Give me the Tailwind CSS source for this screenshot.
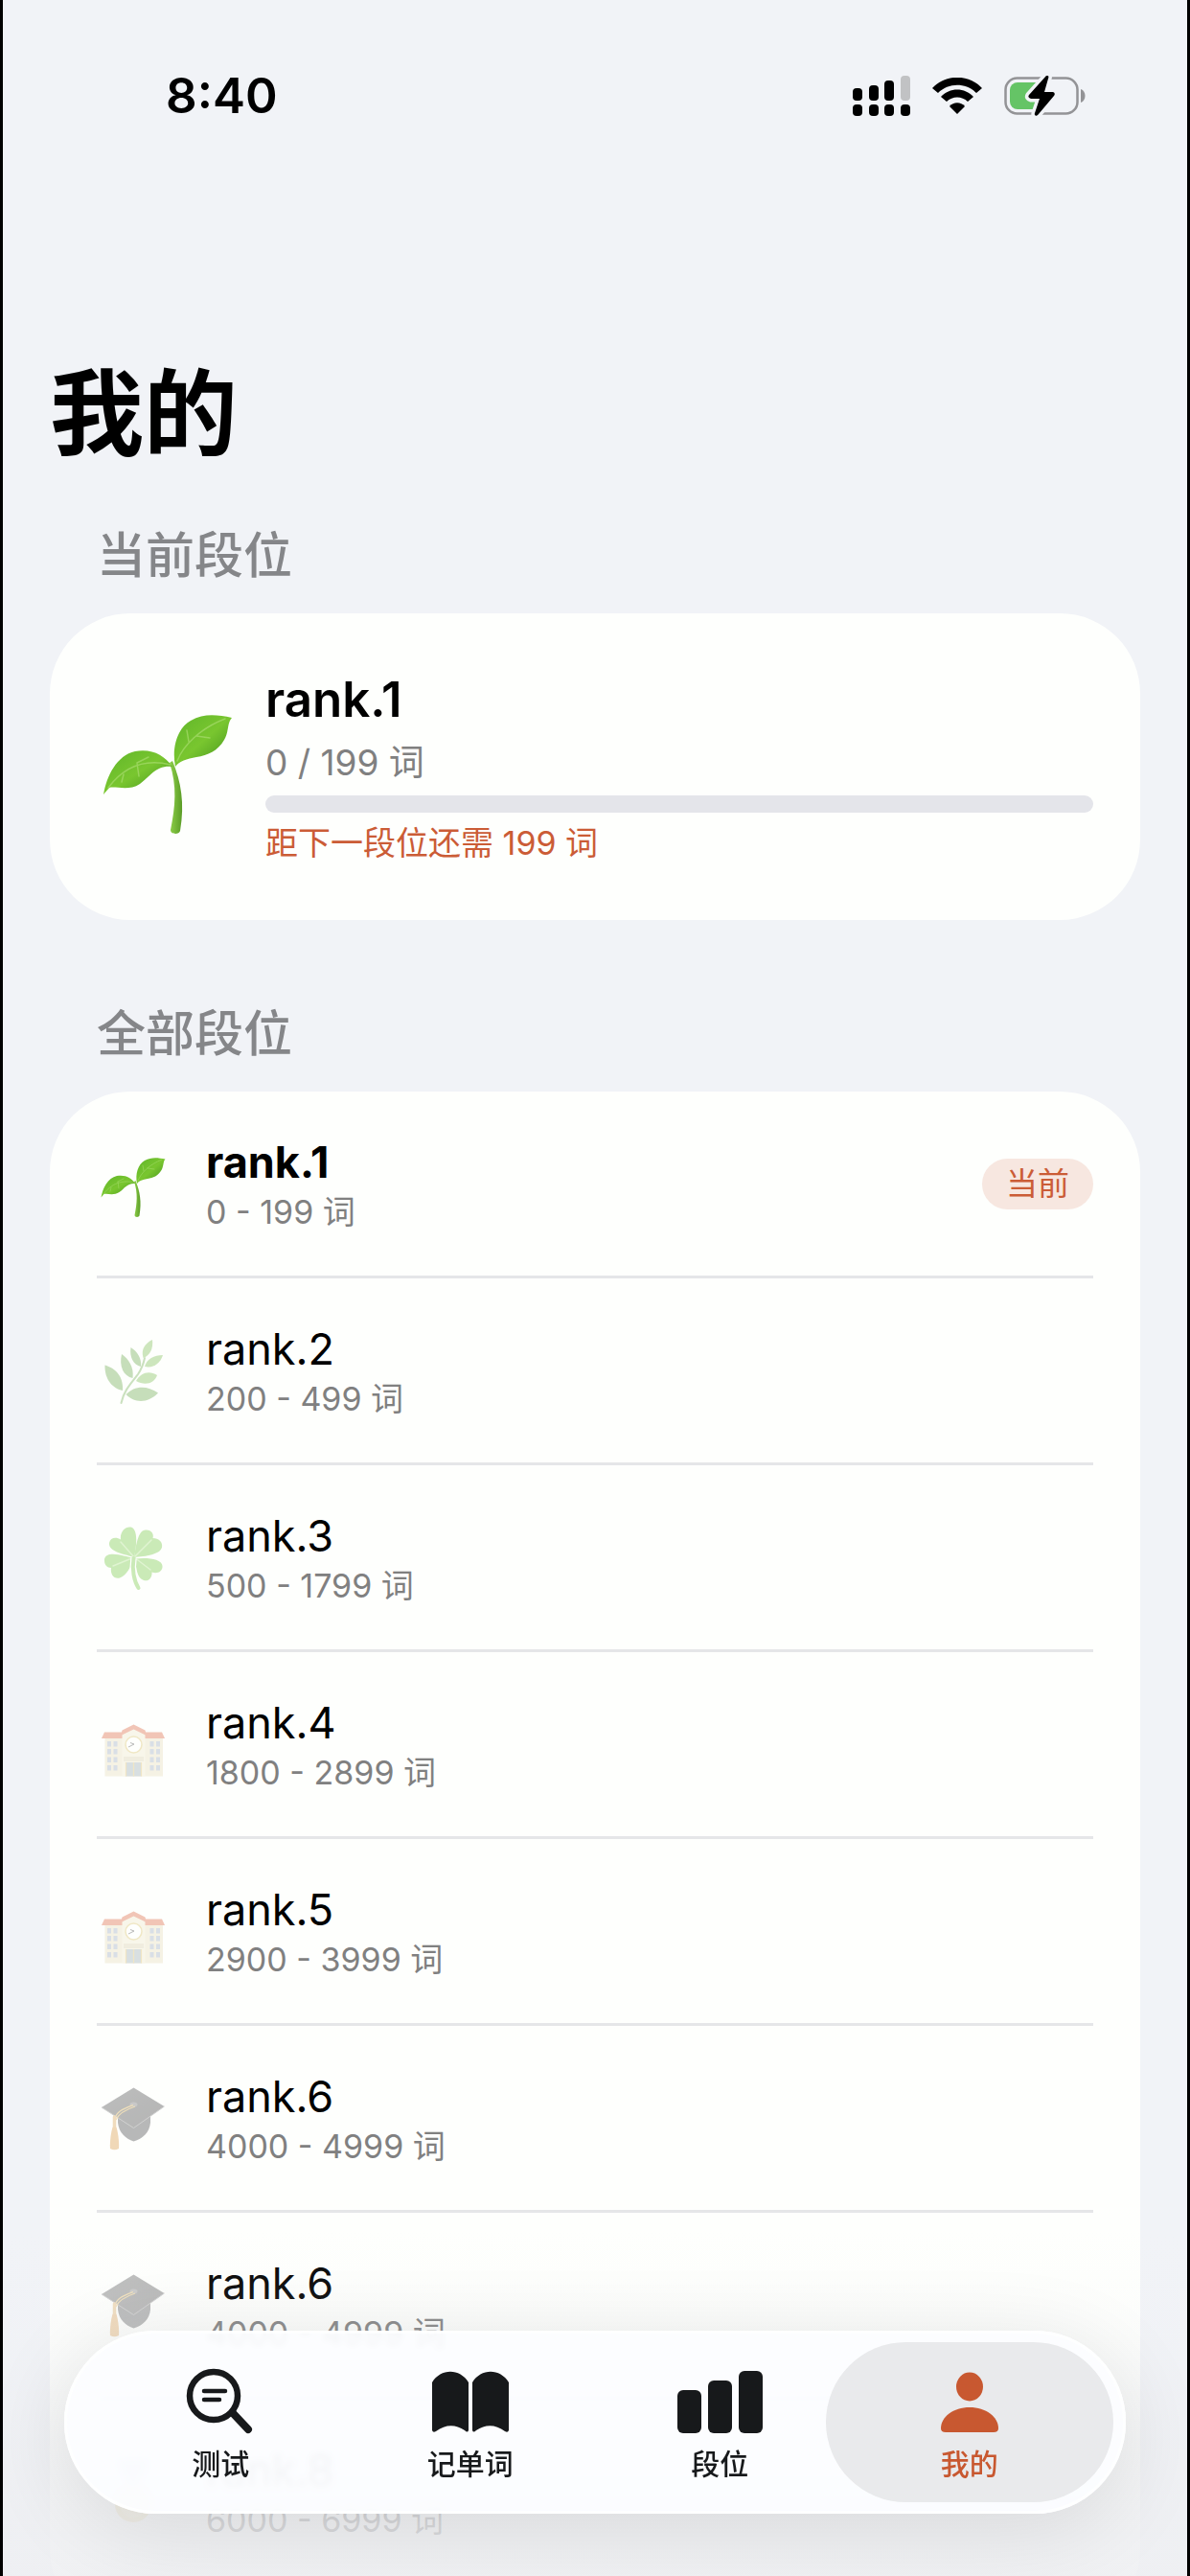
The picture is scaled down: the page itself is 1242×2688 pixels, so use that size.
<!DOCTYPE html>
<html lang="zh-CN">
<head>
<meta charset="utf-8">
<meta name="viewport" content="width=device-width, initial-scale=1">
<title>我的</title>
<script src="https://cdn.jsdelivr.net/npm/@tailwindcss/browser@4"></script>
</head>
<body class="bg-black font-['Inter','Noto_Sans_CJK_SC',sans-serif] text-black">

<!-- Shared drawings -->
<svg class="absolute size-0" aria-hidden="true">
  <defs>
    <linearGradient id="leafA" x1="0" y1="0" x2="1" y2="1"><stop offset="0" stop-color="#5fb52a"/><stop offset=".5" stop-color="#79c62f"/><stop offset="1" stop-color="#3f8f1c"/></linearGradient>
    <linearGradient id="stemA" x1="0" y1="0" x2="1" y2="0"><stop offset="0" stop-color="#8fd04a"/><stop offset="1" stop-color="#5a9c26"/></linearGradient>
    <linearGradient id="capA" x1="0" y1="0" x2="1" y2="1"><stop offset="0" stop-color="#5c5c5e"/><stop offset="1" stop-color="#48484a"/></linearGradient>
  </defs>
  <symbol id="sprout" viewBox="0 0 148 148">
    <path d="M79 68C88 90 92 112 87 141C86 145 77 145 77 140C82 116 84 94 76 70Z" fill="url(#stemA)"/>
    <path d="M7 103C10 84 21 62 40 58C58 55 70 62 79 74C62 72 56 84 45 92C33 100 20 94 13 96Z" fill="url(#leafA)"/>
    <path d="M82 74C78 54 84 34 98 26C112 18 126 20 141 23C136 28 138 38 133 46C126 58 116 62 104 64C94 66 86 68 82 74Z" fill="url(#leafA)"/>
    <path d="M12 96C24 80 44 64 77 72M84 68C90 52 108 34 134 24M28 82L26 90M42 70L44 84M42 70L54 64M96 48L94 36M104 42L118 44" fill="none" stroke="#a6dc6c" stroke-opacity=".7" stroke-width="1.500" stroke-linecap="round"/>
  </symbol>
  <symbol id="herb" viewBox="0 0 148 148">
    <path d="M49 142C54 116 72 98 84 82C92 70 96 58 98 48" fill="none" stroke="#7fb562" stroke-width="4" stroke-linecap="round"/>
    <g fill="#74ad57">
      <path d="M52 116C32 112 14 94 15 63C32 68 54 82 52 116Z"/>
      <path d="M73 90C54 86 44 66 50 40C64 50 76 66 73 90Z"/>
      <path d="M90 66C74 62 66 46 69 26C82 34 92 48 90 66Z"/>
      <path d="M59 124C76 106 102 104 126 121C106 142 78 144 59 124Z"/>
    </g>
    <g fill="#86c35e">
      <path d="M95 48C90 30 98 18 114 10C116 28 110 42 95 48Z"/>
      <path d="M98 66C102 50 118 42 136 42C130 60 116 70 98 66Z"/>
      <path d="M80 96C90 78 108 74 124 84C118 102 98 106 80 96Z"/>
    </g>
  </symbol>
  <symbol id="clover" viewBox="0 0 148 148">
    <g fill="#7ecb50">
      <path d="M76 74C60 68 22 64 24 44C26 33 38 31 48 37C46 20 58 9 69 11C85 15 81 50 76 74Z"/>
      <path d="M76 74C80 50 84 17 100 17C112 16 118 26 115 34C127 34 136 42 134 53C131 68 100 72 76 74Z"/>
      <path d="M78 77C100 74 134 76 135 92C136 104 124 109 113 105C114 117 106 125 96 122C82 118 80 96 78 77Z"/>
      <path d="M74 76C58 72 18 58 14 78C13 90 20 96 28 96C26 110 34 120 46 117C60 112 70 94 74 76Z"/>
    </g>
    <path d="M76 74L48 42M76 74L112 38M76 74L110 100M76 74L32 92" stroke="#b4e492" stroke-width="3" stroke-linecap="round"/>
    <path d="M75 76C71 100 76 124 85 138" fill="none" stroke="#fefffd" stroke-width="13"/>
    <path d="M75 76C71 100 76 124 85 138" fill="none" stroke="#7ecb50" stroke-width="8" stroke-linecap="round"/>
  </symbol>
  <symbol id="school" viewBox="0 0 148 148">
    <path d="M15 60H136V141H15Z" fill="#e9dfc0"/>
    <path d="M8 62L14 49H134L140 62Z" fill="#e0714e"/>
    <path d="M51 54L75 40L99 54V141H51Z" fill="#f1ead0"/>
    <path d="M48 56L51 45L75 33L99 45L102 56L75 43Z" fill="#e0714e"/>
    <circle cx="75" cy="75" r="17" fill="#fff" stroke="#dcc673" stroke-width="3"/>
    <path d="M64 80L76 74L68 71" fill="none" stroke="#555" stroke-width="2"/>
    <path d="M54 100H96V110H54Z" fill="#ddd3b4"/>
    <path d="M59 112H91V141H59Z" fill="#a2b0b9"/>
    <path d="M59 112V141M75 112V141M91 112V141" stroke="#dcbf74" stroke-width="2.500"/>
    <path d="M20 68h8v11h-8zM33 68h8v11h-8zM20 84h8v11h-8zM33 84h8v11h-8zM20 101h8v11h-8zM33 101h8v11h-8zM20 118h8v11h-8zM33 118h8v11h-8zM109 68h8v11h-8zM122 68h8v11h-8zM109 84h8v11h-8zM122 84h8v11h-8zM109 101h8v11h-8zM122 101h8v11h-8zM109 118h8v11h-8zM122 118h8v11h-8z" fill="#a3b1c4"/>
  </symbol>
  <symbol id="gradcap" viewBox="0 0 148 148">
    <path d="M42 68V84C44 104 58 118 75 123C94 118 108 104 110 84V68Z" fill="#505052"/>
    <path d="M75 11L139 50L75 95L8 52Z" fill="url(#capA)"/>
    <path d="M8 52L75 95L139 50" fill="none" stroke="#8e8e90" stroke-width="2"/>
    <ellipse cx="75" cy="46" rx="8" ry="5" fill="#78787a"/>
    <path d="M74 47C56 54 38 60 35 78M78 50C60 56 44 64 38 78" fill="none" stroke="#dcb258" stroke-width="2.500"/>
    <path d="M35 72V92" stroke="#dda95e" stroke-width="7" stroke-linecap="round"/>
    <path d="M31 93H39C43 108 45 124 44 138Q35 143 26 138C25 124 27 108 31 93Z" fill="#dd9f50"/>
  </symbol>
  <symbol id="medal" viewBox="0 0 148 148">
    <path d="M44 10H104L84 66H64Z" fill="#6d9fd0"/>
    <circle cx="74" cy="100" r="38" fill="#e6c25a"/><circle cx="74" cy="100" r="28" fill="#f0d67c"/>
  </symbol>
</svg>

<div class="relative mx-[3px] h-screen overflow-hidden bg-[#f1f3f7]">

  <!-- Status bar -->
  <header class="flex items-center justify-between pt-[70px] pr-[106px] pl-[170px]">
    <time class="text-[51px] leading-[60px] font-semibold">8:40</time>
    <div class="flex items-center gap-[23px]">
      <svg class="h-[42px] w-[60px]" viewBox="0 0 60 42" aria-label="信号">
        <rect x="0" y="13" width="10" height="13" rx="4"/><rect x="17" y="10" width="10" height="16" rx="4"/><rect x="33" y="5" width="10" height="21" rx="4"/><rect x="50" y="0" width="10" height="26" rx="4" fill="#c1c2c4"/>
        <rect x="0" y="30" width="10" height="12" rx="4"/><rect x="17" y="30" width="10" height="12" rx="4"/><rect x="33" y="30" width="10" height="12" rx="4"/><rect x="50" y="30" width="10" height="12" rx="4"/>
      </svg>
      <svg class="h-[38px] w-[52px]" viewBox="0 0 52 38" aria-label="无线网络">
        <path d="M0 11C14 -4 38 -4 52 11L46 16C35 5 17 5 6 16Z"/>
        <path d="M9 20C18 10 34 10 43 20L37 25C31 19 21 19 15 25Z"/>
        <path d="M18 30C22 25 30 25 34 30L26 38Z"/>
      </svg>
      <svg class="h-[42px] w-[85px]" viewBox="0 0 85 42" aria-label="充电中">
        <rect x="1.500" y="2.500" width="75" height="37" rx="12" fill="none" stroke="#939396" stroke-width="2.500"/>
        <path d="M80 14C86 16 86 26 80 28Z" fill="#939396"/>
        <rect x="6" y="7" width="31" height="28" rx="8" fill="#65c466"/><path d="M26 7H38V35H26Z" fill="#65c466"/>
        <path d="M44 0C46 -1 47 1 46 3L42 17H51Q54 18 52 21L36 40C34 43 31 42 32 39L37 24H28Q24 23 26 20Z" stroke="#f1f3f7" stroke-width="7" stroke-linejoin="round" fill="#f1f3f7"/>
        <path d="M44 0C46 -1 47 1 46 3L42 17H51Q54 18 52 21L36 40C34 43 31 42 32 39L37 24H28Q24 23 26 20Z"/>
      </svg>
    </div>
  </header>

  <main class="px-[49px]">
    <h1 class="mt-[242px] text-[98px] leading-[120px] font-bold">我的</h1>

    <section>
      <h2 class="mt-[58px] px-[49px] text-[51px] leading-[60px] font-medium text-[#858689]">当前段位</h2>
      <div class="mt-[30px] flex items-center gap-[28px] rounded-[84px] bg-[#fefffd] px-[49px] py-[60px]">
        <svg class="size-[148px] shrink-0" aria-hidden="true"><use href="#sprout"/></svg>
        <div class="min-w-0 flex-1">
          <p class="text-[51px] leading-[60px] font-semibold">rank.1</p>
          <p class="mt-[14px] text-[37px] leading-[44px] text-[#808080]">0 / 199 词</p>
          <progress class="mt-3 block h-[18px] w-full appearance-none overflow-hidden rounded-full bg-[#e4e5ea] [&::-webkit-progress-bar]:bg-[#e4e5ea] [&::-webkit-progress-value]:bg-[#c85830]" value="0" max="199" aria-label="段位进度"></progress>
          <p class="mt-3 text-[34px] leading-[40px] text-[#cb5c36]">距下一段位还需 199 词</p>
        </div>
      </div>
    </section>

    <section>
      <h2 class="mt-[89px] px-[49px] text-[51px] leading-[60px] font-medium text-[#858689]">全部段位</h2>
      <ul class="mt-[30px] divide-y-3 divide-[#e5e6e8] rounded-[84px] bg-[#fefffd] px-[49px] pb-12">
        <li class="flex items-center gap-[39px]">
          <svg class="ml-px size-[74px] shrink-0" aria-hidden="true"><use href="#sprout"/></svg>
          <div class="flex-1 pt-12 pb-10">
            <p class="text-[45px] leading-[52px] font-bold">rank.1</p>
            <p class="text-[34px] leading-[52px] text-[#808080]">0 - 199 词</p>
          </div>
          <span class="rounded-full bg-[#f7e7e0] px-[25px] py-1 text-[33px] leading-[45px] text-[#cb5c36]">当前</span>
        </li>
        <li class="flex items-center gap-[39px]">
          <svg class="ml-px size-[74px] shrink-0 opacity-40" aria-hidden="true"><use href="#herb"/></svg>
          <div class="flex-1 pt-12 pb-10">
            <p class="text-[45px] leading-[52px]">rank.2</p>
            <p class="text-[34px] leading-[52px] text-[#808080]">200 - 499 词</p>
          </div>
        </li>
        <li class="flex items-center gap-[39px]">
          <svg class="ml-px size-[74px] shrink-0 opacity-40" aria-hidden="true"><use href="#clover"/></svg>
          <div class="flex-1 pt-12 pb-10">
            <p class="text-[45px] leading-[52px]">rank.3</p>
            <p class="text-[34px] leading-[52px] text-[#808080]">500 - 1799 词</p>
          </div>
        </li>
        <li class="flex items-center gap-[39px]">
          <svg class="ml-px size-[74px] shrink-0 opacity-40" aria-hidden="true"><use href="#school"/></svg>
          <div class="flex-1 pt-12 pb-10">
            <p class="text-[45px] leading-[52px]">rank.4</p>
            <p class="text-[34px] leading-[52px] text-[#808080]">1800 - 2899 词</p>
          </div>
        </li>
        <li class="flex items-center gap-[39px]">
          <svg class="ml-px size-[74px] shrink-0 opacity-40" aria-hidden="true"><use href="#school"/></svg>
          <div class="flex-1 pt-12 pb-10">
            <p class="text-[45px] leading-[52px]">rank.5</p>
            <p class="text-[34px] leading-[52px] text-[#808080]">2900 - 3999 词</p>
          </div>
        </li>
        <li class="flex items-center gap-[39px]">
          <svg class="ml-px size-[74px] shrink-0 opacity-40" aria-hidden="true"><use href="#gradcap"/></svg>
          <div class="flex-1 pt-12 pb-10">
            <p class="text-[45px] leading-[52px]">rank.6</p>
            <p class="text-[34px] leading-[52px] text-[#808080]">4000 - 4999 词</p>
          </div>
        </li>
        <li class="flex items-center gap-[39px]">
          <svg class="ml-px size-[74px] shrink-0 opacity-40" aria-hidden="true"><use href="#gradcap"/></svg>
          <div class="flex-1 pt-12 pb-10">
            <p class="text-[45px] leading-[52px]">rank.6</p>
            <p class="text-[34px] leading-[52px] text-[#808080]">4000 - 4999 词</p>
          </div>
        </li>
        <li class="flex items-center gap-[39px]">
          <svg class="ml-px size-[74px] shrink-0 opacity-40" aria-hidden="true"><use href="#medal"/></svg>
          <div class="flex-1 pt-12 pb-10">
            <p class="text-[45px] leading-[52px]">rank.8</p>
            <p class="text-[34px] leading-[52px] text-[#808080]">6000 - 6999 词</p>
          </div>
        </li>
      </ul>
    </section>
  </main>

  <!-- Fade under the tab bar -->
  <div class="pointer-events-none absolute inset-x-0 bottom-0 h-[360px] bg-[linear-gradient(to_bottom,#eeeff200_0%,#eeeff21f_25%,#eeeff266_50%,#eeeff2cc_85%,#eeeff2d9_100%)]"></div>

  <!-- Tab bar -->
  <nav class="absolute inset-x-[64px] bottom-[65px] rounded-full bg-[#fcfdff]/92 px-[33px] py-3 shadow-[0_16px_90px_rgba(0,0,0,0.11)] ring-3 ring-white/80 ring-inset backdrop-blur-[3px]">
    <div class="flex">
      <div class="min-w-0 flex-1">
        <button type="button" class="flex h-[167px] w-full flex-col items-center pt-[25px] text-[30px] leading-[36px] font-medium text-[#17191b]">
          <svg class="h-[76px] w-[90px]" viewBox="0 0 90 76" fill="none" stroke="#17191b" stroke-linecap="round" aria-hidden="true"><circle cx="38" cy="31" r="25" stroke-width="6.500"/><path d="M58 49L74 66" stroke-width="8"/><path d="M28 26H50M28 35H44" stroke-width="4.500"/></svg>
          <span class="mt-2">测试</span>
        </button>
      </div>
      <div class="min-w-0 flex-1">
        <button type="button" class="flex h-[167px] w-full flex-col items-center pt-[25px] text-[30px] leading-[36px] font-medium text-[#17191b]">
          <svg class="h-[76px] w-[90px]" viewBox="0 0 90 76" fill="#17191b" aria-hidden="true"><path d="M5 17C14 2 34 2 43 17V67Q42 70 39 67Q24 57 9 68Q6 70 5 67Z"/><path d="M47 17C56 2 76 2 85 17V67Q84 70 81 68Q66 57 51 67Q48 70 47 67Z"/></svg>
          <span class="mt-2">记单词</span>
        </button>
      </div>
      <div class="min-w-0 flex-1">
        <button type="button" class="flex h-[167px] w-full flex-col items-center pt-[25px] text-[30px] leading-[36px] font-medium text-[#17191b]">
          <svg class="h-[76px] w-[90px]" viewBox="0 0 90 76" fill="#17191b" aria-hidden="true"><rect x="1" y="25" width="25" height="45" rx="6"/><rect x="33" y="15" width="25" height="55" rx="6"/><rect x="65" y="5" width="25" height="65" rx="6"/></svg>
          <span class="mt-2">段位</span>
        </button>
      </div>
      <div class="min-w-0 flex-1">
        <div class="-mx-5">
          <button type="button" aria-current="page" class="flex h-[167px] w-full flex-col items-center rounded-full bg-[#e9eaec] pt-[25px] text-[30px] leading-[36px] font-medium text-[#c85830]">
            <svg class="h-[76px] w-[90px]" viewBox="0 0 90 76" fill="#c85830" aria-hidden="true"><ellipse cx="45" cy="21.500" rx="14" ry="15"/><path d="M15 65C15 53 28 43 45 43S75 53 75 65Q75 69 70 69H20Q15 69 15 65Z"/></svg>
            <span class="mt-2">我的</span>
          </button>
        </div>
      </div>
    </div>
  </nav>
</div>
</body>
</html>
